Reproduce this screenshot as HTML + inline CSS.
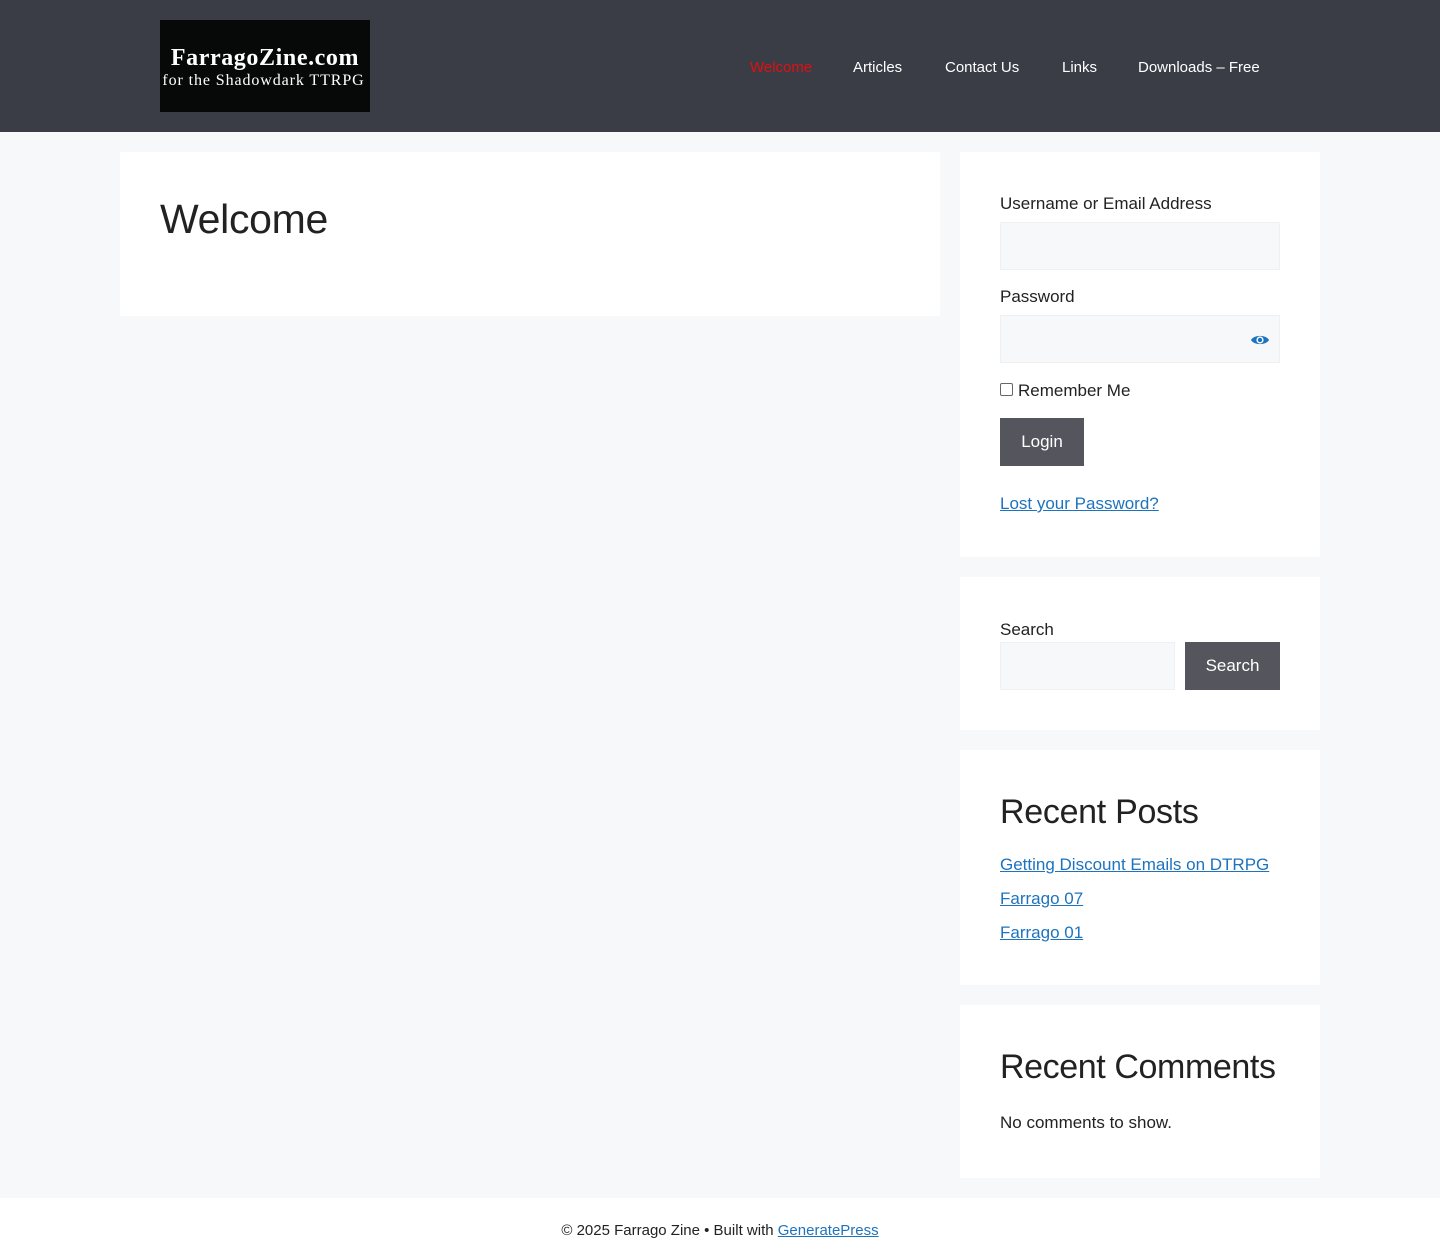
<!DOCTYPE html>
<html><head><meta charset="utf-8"><style>
*{margin:0;padding:0;box-sizing:border-box}
body{width:1440px;height:1260px;background:#f7f8f9;font-family:"Liberation Sans",sans-serif;color:#222;position:relative;overflow:hidden}
.a{position:absolute}
header{position:absolute;left:0;top:0;width:1440px;height:132px;background:#3a3c46}
.logo{left:160px;top:20px;width:210px;height:92px;background:#070808;color:#fff;font-family:"Liberation Serif",serif;text-align:center}
.nav{top:59px;font-size:15px;color:#fff}
.box{background:#fff}
.lbl{font-size:17px;color:#222}
.inp{background:#f6f8fa;border:1px solid #eef0f2}
.btn{background:#55555e;color:#fff;font-size:17px;text-align:center}
a{color:#1e73be}
.lk{font-size:17px;color:#1e73be;text-decoration:underline}
</style></head><body>
<header>
<div class="a logo"><div style="font-size:24px;margin-top:25px;letter-spacing:0.6px;font-weight:bold">FarragoZine.com</div><div style="font-size:16px;margin-top:0px;letter-spacing:0.9px;white-space:nowrap;margin-left:-3px">for the Shadowdark TTRPG</div></div>
<div class="a nav" style="left:750px;color:#e01010">Welcome</div>
<div class="a nav" style="left:853px">Articles</div>
<div class="a nav" style="left:945px">Contact Us</div>
<div class="a nav" style="left:1062px">Links</div>
<div class="a nav" style="left:1138px">Downloads – Free</div>
</header>
<div class="a box" style="left:120px;top:152px;width:820px;height:164px"></div>
<div class="a" style="left:160px;top:196px;font-size:41px;letter-spacing:-0.3px;color:#222">Welcome</div>

<div class="a box" style="left:960px;top:152px;width:360px;height:405px"></div>
<div class="a lbl" style="left:1000px;top:194px">Username or Email Address</div>
<div class="a inp" style="left:1000px;top:222px;width:280px;height:48px"></div>
<div class="a lbl" style="left:1000px;top:287px">Password</div>
<div class="a inp" style="left:1000px;top:315px;width:280px;height:48px"></div>
<svg class="a" style="left:1250px;top:333px" width="20" height="14" viewBox="0 0 20 14"><path d="M1 7C4 1.5 16 1.5 19 7C16 12.5 4 12.5 1 7Z" fill="#1e73be"/><circle cx="10" cy="7" r="3.6" fill="#fff"/><circle cx="10" cy="7" r="2.2" fill="#1e73be"/></svg>
<div class="a" style="left:1000px;top:383px;width:13px;height:13px;border:1px solid #666;border-radius:2px;background:#fff"></div>
<div class="a lbl" style="left:1018px;top:381px">Remember Me</div>
<div class="a btn" style="left:1000px;top:418px;width:84px;height:48px;line-height:48px">Login</div>
<div class="a lk" style="left:1000px;top:494px">Lost your Password?</div>

<div class="a box" style="left:960px;top:577px;width:360px;height:153px"></div>
<div class="a lbl" style="left:1000px;top:620px">Search</div>
<div class="a inp" style="left:1000px;top:642px;width:175px;height:48px"></div>
<div class="a btn" style="left:1185px;top:642px;width:95px;height:48px;line-height:48px">Search</div>

<div class="a box" style="left:960px;top:750px;width:360px;height:235px"></div>
<div class="a" style="left:1000px;top:793px;font-size:34px;letter-spacing:-0.3px">Recent Posts</div>
<div class="a lk" style="left:1000px;top:855px">Getting Discount Emails on DTRPG</div>
<div class="a lk" style="left:1000px;top:889px">Farrago 07</div>
<div class="a lk" style="left:1000px;top:923px">Farrago 01</div>

<div class="a box" style="left:960px;top:1005px;width:360px;height:173px"></div>
<div class="a" style="left:1000px;top:1048px;font-size:34px;letter-spacing:-0.4px">Recent Comments</div>
<div class="a lbl" style="left:1000px;top:1113px">No comments to show.</div>

<div class="a" style="left:0;top:1198px;width:1440px;height:62px;background:#fff"></div>
<div class="a" style="left:0;top:1222px;width:1440px;text-align:center;font-size:15px;color:#222">© 2025 Farrago Zine • Built with <a href="#" style="color:#1e73be">GeneratePress</a></div>
</body></html>
